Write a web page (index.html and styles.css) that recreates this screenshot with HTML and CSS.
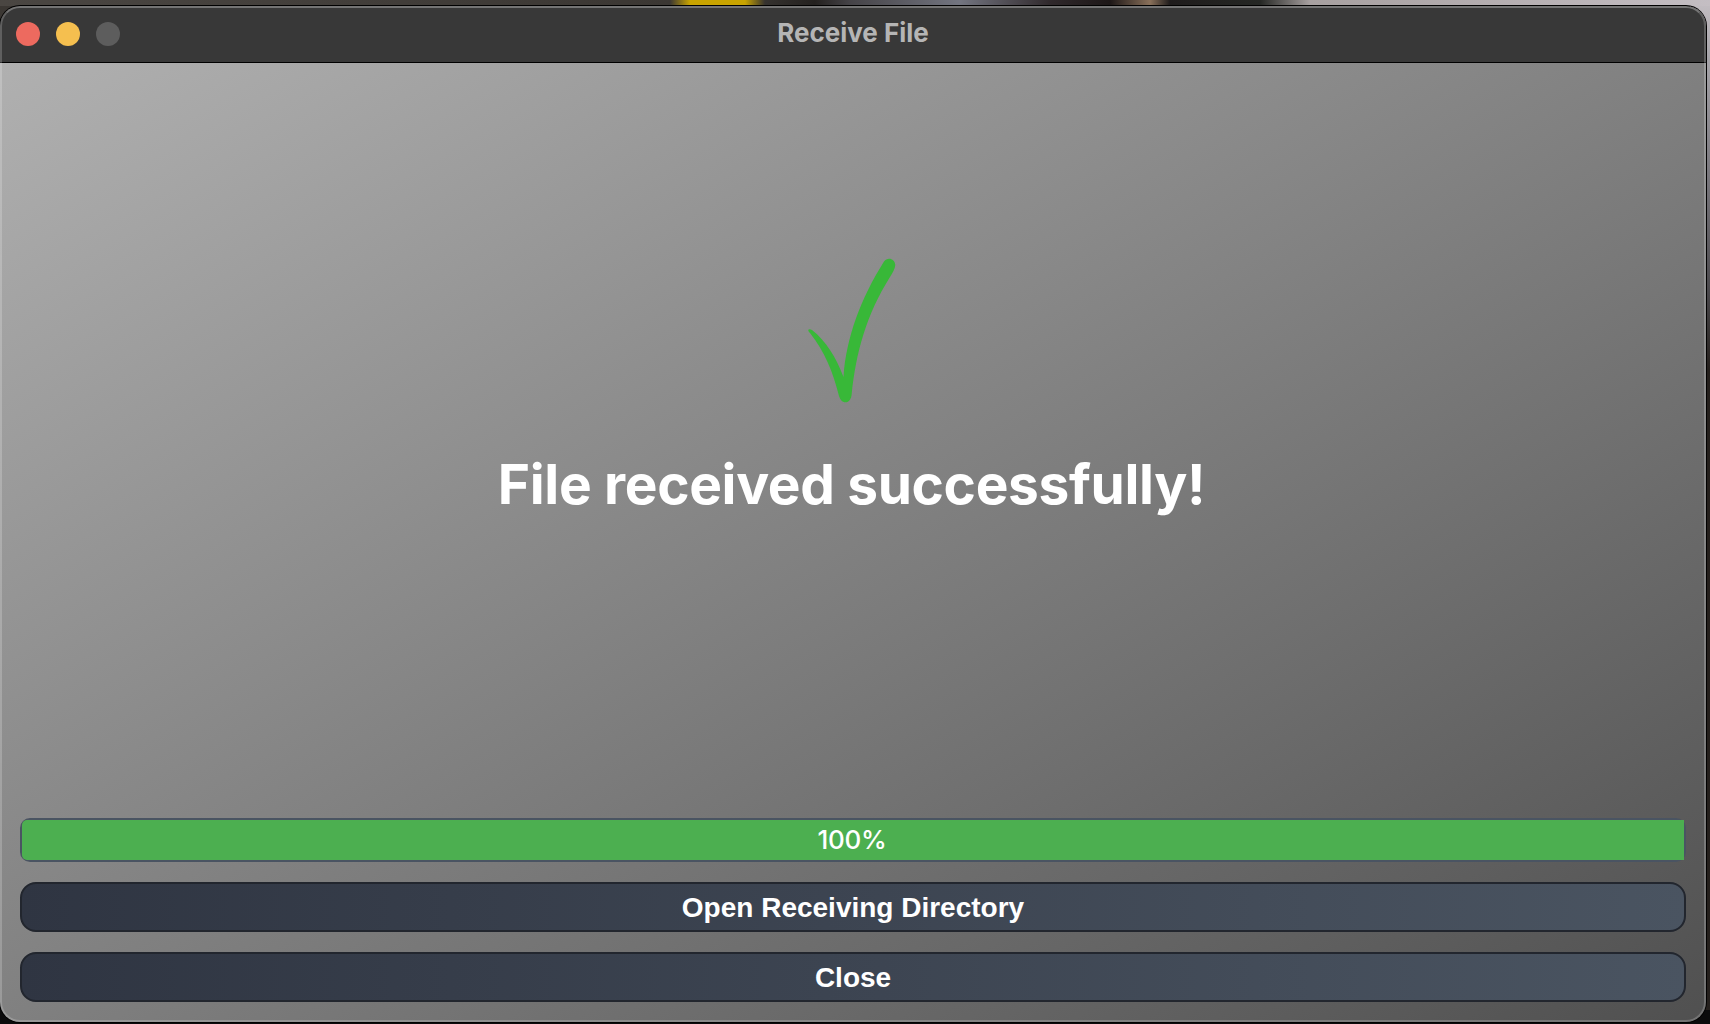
FILE: index.html
```html
<!DOCTYPE html>
<html lang="en">
<head>
<meta charset="utf-8">
<title>Receive File</title>
<link rel="stylesheet" href="styles.css">
</head>
<body>
<div class="window">
  <header class="titlebar">
    <div class="lights">
      <span class="light light-close"></span>
      <span class="light light-minimize"></span>
      <span class="light light-zoom"></span>
    </div>
    <div class="title"><span class="title-text">Receive File</span></div>
    <div class="titlebar-end"></div>
  </header>
  <main class="content">
    <section class="status">
      <svg class="check" viewBox="0 0 140 180" width="140" height="180" aria-hidden="true">
        <path fill="#38b838" d="M28.3 89.8 C29 88.8 30.5 89 32 90 C46 101 56 117 63.5 137 C66 98 81 58 104 21.5 C107.5 16.5 115 18.500 115.300 25 C115 29 112.500 33 110 37 C86 75 76 113 71.700 154 C71.300 159 69 162.300 65.500 162.300 C62 162.300 60.200 159.500 59 156 C53 132 45 112 30 93 C29 92 28 91 28.300 89.800 Z"/>
      </svg>
      <h1 class="message">File received successfully!</h1>
    </section>
    <div class="progress"><div class="progress-fill" style="width:100%"><span class="progress-text">100%</span></div></div>
    <button class="button" type="button">Open Receiving Directory</button>
    <button class="button" type="button">Close</button>
  </main>
</div>
</body>
</html>
```
FILE: styles.css
```css
* { box-sizing: border-box; }

html { height: 100%; }

body {
  margin: 0;
  height: 1024px;
  padding-top: 6px;
  overflow: hidden;
  font-family: Inter, "Liberation Sans", sans-serif;
  background:
    linear-gradient(90deg, #4a4642 0, #3b3733 670px, #c9a400 690px, #c9a400 745px, #35322f 765px, #24211f 815px, #454347 850px, #737580 960px, #30292c 1050px, #1d1717 1110px, #89705a 1150px, #1f1c1c 1170px, #252724 1260px, #a7a0a0 1310px, #c4bec3 1710px) 0 0 / 1710px 6px no-repeat,
    linear-gradient(180deg, #c4bec3 0, #a5a3a8 60px, #77757b 180px, #4b494d 290px, #25201d 370px, #25201d 1024px) 1690px 0 / 20px 1010px no-repeat,
    linear-gradient(#3b3733, #3b3733) 0 0 / 20px 20px no-repeat,
    #0b0b0c;
}

.window {
  position: relative;
  display: flex;
  flex-direction: column;
  width: 1706px;
  height: 1016px;
  overflow: hidden;
  border-radius: 20px;
  box-shadow: 0 0 0 1px #000;
}

/* Translucent rim around the whole window */
.window::after {
  content: "";
  position: absolute;
  inset: 0;
  border: 2px solid rgba(255, 255, 255, 0.2);
  border-top-color: rgba(255, 255, 255, 0.3);
  border-radius: inherit;
  pointer-events: none;
}

.titlebar {
  display: grid;
  grid-template-columns: 1fr auto 1fr;
  align-items: center;
  height: 57px;
  padding: 0 16px;
  background: #383838;
  border-bottom: 1px solid #000;
}

.lights { display: flex; gap: 16px; }
.light { width: 24px; height: 24px; border-radius: 50%; }
.light-close { background: #ed6a5f; }
.light-minimize { background: #f5bf4f; }
.light-zoom { background: #5d5d5d; }

.title {
  padding-bottom: 2px;
  color: #b5b5b5;
  font-size: 26px;
  font-weight: 700;
  line-height: 30px;
}

.content {
  flex: 1;
  display: flex;
  flex-direction: column;
  padding: 0 20px 20px;
  background: linear-gradient(to bottom right, #b0b0b0 0%, #808080 50%, #505050 100%);
}

.status {
  flex: 1;
  display: flex;
  flex-direction: column;
  align-items: center;
  padding: 177px 6px 0 0;
}

.check { display: block; }

.message {
  margin: 31px 0 0 3px;
  color: #fff;
  font-size: 55px;
  font-weight: 700;
  letter-spacing: -0.34px;
  line-height: 66px;
  white-space: nowrap;
}

.progress {
  height: 44px;
  margin-bottom: 20px;
  border: 2px solid #4a5462;
  border-radius: 10px;
}

.progress-fill {
  display: flex;
  align-items: center;
  justify-content: center;
  height: 100%;
  padding: 0 2px 2px 0;
  border-radius: 5px 0 0 5px;
  background: #4caf50;
  color: #fff;
  font-size: 26px;
  font-weight: 500;
  letter-spacing: -0.3px;
}

.button {
  height: 50px;
  padding: 2px 0 0;
  border: 2px solid #22262e;
  border-radius: 16px;
  background: linear-gradient(90deg, #2f3542, #4a5461) border-box;
  color: #fff;
  font: bold 28px/32px "Liberation Sans", Arial, sans-serif;
}

.button + .button { margin-top: 20px; }
```
